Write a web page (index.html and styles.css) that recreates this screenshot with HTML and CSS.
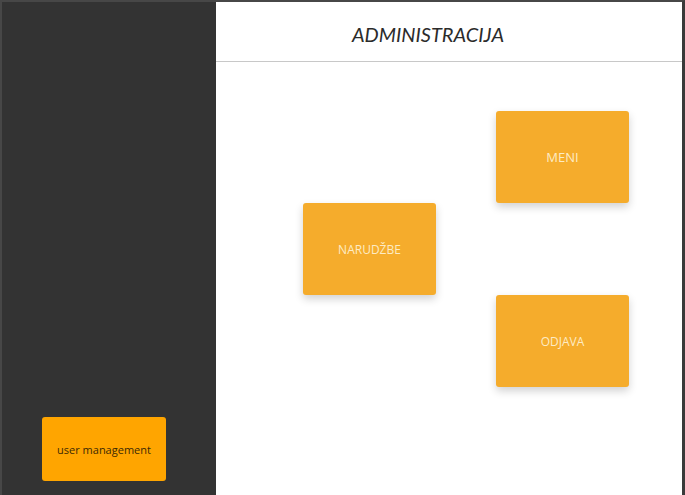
FILE: index.html
```html
<!DOCTYPE html>
<html>
<head>
<meta charset="utf-8">
<link rel="stylesheet" href="styles.css">
</head>
<body>
<div class="frame">
  <aside class="sidebar">
    <button class="user-btn">user management</button>
  </aside>
  <main class="main">
    <header class="header"><h1 class="title">ADMINISTRACIJA</h1></header>
    <section class="tiles">
      <button class="tile tile-meni">MENI</button>
      <button class="tile tile-narudzbe">NARUDŽBE</button>
      <button class="tile tile-odjava">ODJAVA</button>
    </section>
  </main>
</div>
</body>
</html>
```
FILE: styles.css
```css
html, body {
  margin: 0;
  padding: 0;
  height: 100%;
}
body {
  font-family: "Open Sans", "Noto Sans", sans-serif;
  background: #ffffff;
}
.frame {
  box-sizing: border-box;
  height: 495px;
  width: 685px;
  display: flex;
  border: 2px solid #474747;
  border-bottom: none;
  border-right-width: 3px;
  border-right-color: #3a3a3a;
}
.sidebar {
  width: 214px;
  flex: none;
  background: #333333;
  display: flex;
  flex-direction: column;
  justify-content: flex-end;
  padding: 0 0 14px 40px;
  box-sizing: border-box;
}
.user-btn {
  width: 124px;
  height: 64px;
  background: #ffa500;
  border: none;
  border-radius: 3px;
  color: #3d2a05;
  font-family: "Open Sans", "Noto Sans", sans-serif;
  font-size: 11px;
  padding: 0;
}
.main {
  flex: 1;
  display: flex;
  flex-direction: column;
  background: #fff;
}
.header {
  height: 59px;
  border-bottom: 1px solid #c8c8c8;
  display: flex;
  align-items: center;
  justify-content: center;
  padding-right: 42px;
}
.title {
  margin: 0;
  font-family: "Lato", sans-serif;
  font-style: italic;
  font-weight: 400;
  font-size: 20px;
  color: #2b2b2b;
  letter-spacing: 0;
  padding-top: 4px;
}
.tiles {
  display: grid;
  grid-template-columns: 133px 133px;
  grid-template-rows: 92px 92px 92px;
  column-gap: 60px;
  padding: 49px 0 0 87px;
}
.tile {
  background: #f5ac2c;
  border: none;
  border-radius: 3px;
  color: #fdebc4;
  font-family: "Open Sans", "Noto Sans", sans-serif;
  font-weight: 400;
  font-size: 12px;
  box-shadow: 0 4px 8px rgba(0, 0, 0, 0.18);
  padding: 0;
}
.tile-meni {
  grid-column: 2;
  grid-row: 1;
  font-size: 13px;
}
.tile-narudzbe {
  grid-column: 1;
  grid-row: 2;
}
.tile-odjava {
  grid-column: 2;
  grid-row: 3;
}
```
